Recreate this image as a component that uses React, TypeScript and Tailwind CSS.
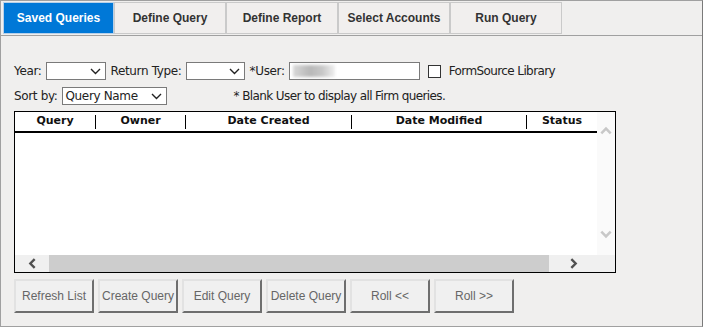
import React from "react";

const tabs = ["Saved Queries", "Define Query", "Define Report", "Select Accounts", "Run Query"];

const columns = [
  { label: "Query", w: 81 },
  { label: "Owner", w: 90 },
  { label: "Date Created", w: 166 },
  { label: "Date Modified", w: 175 },
  { label: "Status", w: 70 },
];

const buttons = ["Refresh List", "Create Query", "Edit Query", "Delete Query", "Roll <<", "Roll >>"];

function FakeSelect({ width, value }: { width: number; value?: string }) {
  return (
    <div
      className="h-[18px] bg-white border border-[#7a7a7a] flex items-center justify-between pl-[3px] pr-[4px] text-[12px] text-[#222]"
      style={{ width }}
    >
      <span>{value ?? ""}</span>
      <svg width="11" height="7" viewBox="0 0 11 7">
        <path d="M1 1 L5.5 5.5 L10 1" fill="none" stroke="#222" strokeWidth="1.4" />
      </svg>
    </div>
  );
}

function Chevron({ dir, color, size = 12 }: { dir: "up" | "down" | "left" | "right"; color: string; size?: number }) {
  const d = {
    up: "M2 8 L6 4 L10 8",
    down: "M2 4 L6 8 L10 4",
    left: "M8 2 L4 6 L8 10",
    right: "M4 2 L8 6 L4 10",
  }[dir];
  return (
    <svg width={size} height={size} viewBox="0 0 12 12">
      <path d={d} fill="none" stroke={color} strokeWidth="2.2" />
    </svg>
  );
}

export default function App() {
  return (
    <div className="w-[703px] h-[327px] bg-[#f0efee] border-t border-l border-b border-[#a0a0a0] border-r border-r-[#7a7a7a] font-['Liberation_Sans',Arial,sans-serif] overflow-hidden">
      {/* Tabs */}
      <div className="flex h-[35px] pl-[2px] pt-[1px] border-b border-[#a0a0a0]">
        {tabs.map((t, i) => (
          <div
            key={t}
            className={
              i === 0
                ? "w-[111px] h-[32px] flex items-center justify-center text-[12px] font-bold text-white bg-[#0078d7] border border-[#b8d0e8]"
                : "w-[112px] h-[32px] flex items-center justify-center text-[12px] font-bold text-[#333] bg-[#f1efee] border border-[#cacaca]"
            }
          >
            {t}
          </div>
        ))}
      </div>

      {/* Filters */}
      <div className="pl-[13px] pt-[26px] text-[12px] text-[#222] font-['DejaVu_Sans',Verdana,sans-serif] tracking-[-0.35px]">
        <div className="flex items-center h-[18px]">
          <span className="mr-[4px]">Year:</span>
          <FakeSelect width={60} />
          <span className="ml-[5px] mr-[4px]">Return Type:</span>
          <FakeSelect width={59} />
          <span className="ml-[5px] mr-[4px]">*User:</span>
          <div className="w-[131px] h-[18px] bg-white border border-[#7a7a7a] flex items-center pl-[3px]">
            <div className="w-[42px] h-[12px] bg-[linear-gradient(90deg,#d8d8d8,#b8b8b8_40%,#c8c8c8_70%,#f0f0f0)] blur-[1.5px]" />
          </div>
          <div className="ml-[8px] w-[13px] h-[13px] bg-white border border-[#333]" />
          <span className="ml-[8px] tracking-[-0.6px]">FormSource Library</span>
        </div>
        <div className="flex items-center h-[18px] mt-[7px]">
          <span className="mr-[4px]">Sort by:</span>
          <FakeSelect width={105} value="Query Name" />
          <span className="ml-[67px] tracking-[-0.6px]">* Blank User to display all Firm queries.</span>
        </div>
      </div>

      {/* Table */}
      <div className="ml-[13px] mt-[6px] w-[602px] h-[162px] bg-white border border-black flex flex-col">
        <div className="flex flex-1 min-h-0">
          <div className="w-[582px]">
            <div className="flex h-[21px] border-b-2 border-black items-center font-['DejaVu_Sans',Verdana,sans-serif] font-bold text-[11px] text-[#111]">
              {columns.map((c, i) => (
                <div
                  key={c.label}
                  className={
                    i < columns.length - 1
                      ? "h-[14px] flex items-center justify-center border-r border-black"
                      : "h-[14px] flex items-center justify-center"
                  }
                  style={{ width: c.w }}
                >
                  {c.label}
                </div>
              ))}
            </div>
          </div>
          <div className="w-[18px] bg-[#fafafa] flex flex-col items-center justify-between pt-[12px] pb-[14px]">
            <Chevron dir="up" color="#c8c8c8" size={14} />
            <Chevron dir="down" color="#c8c8c8" size={14} />
          </div>
        </div>
        <div className="flex h-[17px] bg-[#f0f0f0]">
          <div className="w-[34px] flex items-center justify-center">
            <Chevron dir="left" color="#505050" size={13} />
          </div>
          <div className="w-[500px] bg-[#cdcdcd]" />
          <div className="w-[48px] flex items-center justify-center">
            <Chevron dir="right" color="#505050" size={13} />
          </div>
          <div className="flex-1" />
        </div>
      </div>

      {/* Buttons */}
      <div className="flex gap-[4px] ml-[13px] mt-[6px]">
        {buttons.map((b) => (
          <div
            key={b}
            className="w-[80px] h-[34px] flex items-center justify-center text-[12px] text-[#666] bg-[#f0f0f0] border-2 border-t-[#e2e2e2] border-l-[#e2e2e2] border-b-[#6e6e6e] border-r-[#6e6e6e]"
          >
            {b}
          </div>
        ))}
      </div>
    </div>
  );
}
